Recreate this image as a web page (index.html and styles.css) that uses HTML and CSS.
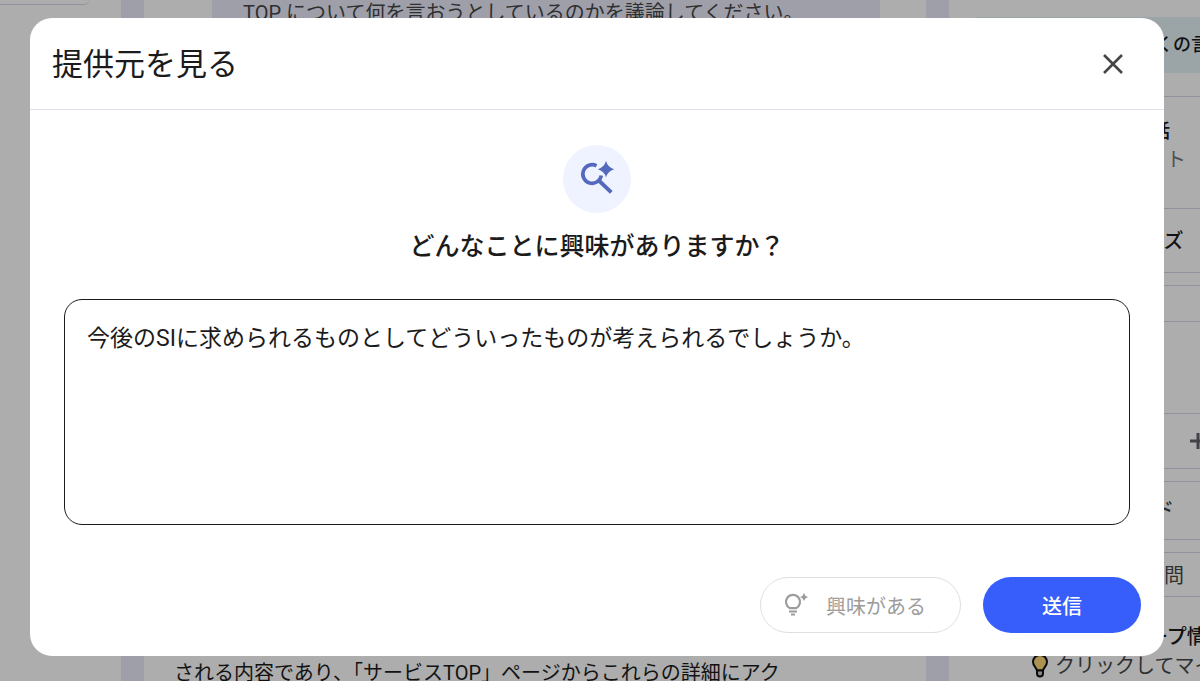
FILE: index.html
```html
<!DOCTYPE html>
<html lang="ja">
<head>
  <meta charset="UTF-8">
  <meta name="viewport" content="width=device-width, initial-scale=1">
  <title>提供元を見る</title>
  <link rel="stylesheet" href="styles.css">
</head>
<body>

  <div class="app">
    <aside class="left">
      <div class="left-card"></div>
    </aside>

    <main class="chat">
      <div class="bubble">TOP について何を言おうとしているのかを議論してください。</div>
      <p class="answer">される内容であり、「サービスTOP」ページからこれらの詳細にアク</p>
    </main>

    <aside class="right">
      <div class="banner">多くの言</div>
      <div class="studio">
        <div class="talk">
          <strong>会話</strong>
          <span class="list">スト</span>
        </div>
        <div class="custom shift"><strong>イズ</strong></div>
      </div>
      <div class="panel">
        <div class="panel-head"></div>
        <div class="panel-body"></div>
        <div class="panel-add">
          <svg width="18" height="18" viewBox="0 0 18 18"><path d="M9 1v16M1 9h16" stroke="#62646a" stroke-width="3"/></svg>
        </div>
      </div>
      <div class="panel guide">ード</div>
      <div class="panel faq shift">質問</div>
      <strong class="info">ープ情</strong>
      <div class="hint">
        <svg width="18" height="24" viewBox="0 0 18 24">
          <path d="M6 16.500C5.500 13.500 2 12 2 8a7 7 0 0 1 14 0c0 4-3.500 5.500-4 8.500z" fill="#ffd676" stroke="#111" stroke-width="2"/>
          <path d="M6 16.500v3a3 3 0 0 0 6 0v-3z" fill="#c8ccd2" stroke="#111" stroke-width="2"/>
        </svg>
        <span>クリックしてマイ</span>
      </div>
    </aside>
  </div>

  <div class="backdrop">
    <form class="modal" role="dialog" aria-labelledby="modalTitle">
      <header class="modal-header">
        <h1 id="modalTitle">提供元を見る</h1>
        <button type="button" class="close" aria-label="閉じる">
          <svg width="22" height="22" viewBox="0 0 22 22"><path d="M2 2l18 18M20 2L2 20" stroke="#444746" stroke-width="2.600"/></svg>
        </button>
      </header>

      <div class="modal-body">
        <div class="search-icon">
          <svg width="68" height="68" viewBox="0 0 68 68">
            <path d="M33.500 20.800A9.300 9.300 0 1 0 38.300 30.500" fill="none" stroke="#5468bd" stroke-width="3.600"/>
            <path d="M35.800 35.500L48.300 47.300" stroke="#5468bd" stroke-width="3.800"/>
            <path d="M43 16q1.800 6.500 8.200 8.300-6.400 1.700-8.200 8.200-1.800-6.500-8.200-8.200 6.400-1.800 8.200-8.300z" fill="#5468bd"/>
          </svg>
        </div>
        <label for="interest">どんなことに興味がありますか？</label>
        <textarea id="interest" name="interest">今後のSIに求められるものとしてどういったものが考えられるでしょうか。</textarea>
      </div>

      <footer class="modal-footer">
        <button type="button" class="btn curious" disabled>
          <svg width="24" height="24" viewBox="0 0 24 24">
            <path d="M6 15.200a7 7 0 1 1 6 0z" fill="none" stroke="#9c9c9c" stroke-width="2.200"/>
            <path d="M5 18.500h8M7 21.500h4" stroke="#9c9c9c" stroke-width="2"/>
            <path d="M20 0q.8 3.200 4 4-3.200.8-4 4-.8-3.200-4-4 3.200-.8 4-4z" fill="#9c9c9c"/>
          </svg>
          興味がある
        </button>
        <button type="submit" class="btn send">送信</button>
      </footer>
    </form>
  </div>

</body>
</html>
```
FILE: styles.css
```css
* {
  box-sizing: border-box;
}

body {
  margin: 0;
  font-family: Roboto, "Noto Sans CJK JP", sans-serif;
  font-size: 20px;
  color: #1b1b1c;
}

strong {
  font-weight: 500;
}

/* page behind the dialog */
.app {
  display: grid;
  grid-template-columns: 121px 1fr 251px;
  gap: 23px;
  height: 100vh;
  overflow: hidden;
  background: #eaeafb;
  white-space: nowrap;
}

.left,
.chat,
.right {
  background: #fff;
  overflow: hidden;
}

.left-card {
  height: 5px;
  margin-right: 32px;
  border-bottom: 1px solid #d5d9e8;
  border-bottom-right-radius: 20px;
}

.bubble {
  height: 600px;
  margin: 0 46px 0 68px;
  padding: 0 31px;
  line-height: 26px;
  background: #eaeafb;
  color: #444746;
}

.answer {
  margin: 0;
  padding: 58px 30px 0;
  line-height: 30px;
}

.right {
  padding: 17px 0 0 26px;
}

.banner {
  height: 56px;
  padding-left: 162px;
  line-height: 56px;
  font-size: 18px;
  font-weight: 500;
  background: #e5f3f8;
}

/* the cards run on past the right edge of the window */
.studio,
.panel {
  margin-right: -20px;
  border: 1px solid #d5d9e8;
}

.studio {
  margin-top: 23px;
}

.talk {
  display: flex;
  flex-direction: column;
  height: 111px;
  padding: 20px 0 0 156px;
  line-height: 29px;
  color: #444746;
}

.talk strong {
  font-size: 19px;
  color: #1b1b1c;
}

.list {
  padding-left: 14px;
  color: #777a80;
}

.custom {
  height: 64px;
  line-height: 64px;
  border-top: 1px solid #d5d9e8;
}

.shift {
  padding-left: 168px;
}

.panel {
  margin-top: 12px;
  color: #444746;
}

.panel-head {
  height: 36px;
  border-bottom: 1px solid #d5d9e8;
}

.panel-body {
  height: 92px;
  border-bottom: 1px solid #d5d9e8;
}

.panel-add {
  display: flex;
  align-items: center;
  justify-content: flex-end;
  height: 54px;
}

.panel-add svg {
  margin-right: 12px;
}

.guide {
  height: 59px;
  padding-left: 158px;
  line-height: 56px;
  font-weight: 500;
}

.faq {
  height: 45px;
  line-height: 46px;
}

.info {
  display: block;
  margin-top: 25px;
  padding-left: 173px;
  line-height: 30px;
}

.hint {
  display: flex;
  align-items: center;
  gap: 6px;
  padding-left: 56px;
  line-height: 28px;
  color: #444746;
}

.hint svg {
  flex-shrink: 0;
}

/* dialog */
.backdrop {
  position: fixed;
  inset: 0;
  display: flex;
  padding: 18px 36px 25px 30px;
  background: rgba(0, 0, 0, 0.32);
}

.modal {
  display: flex;
  flex: 1;
  flex-direction: column;
  border-radius: 22px;
  background: #fff;
}

.modal-header {
  display: flex;
  align-items: center;
  justify-content: space-between;
  height: 92px;
  padding: 0 40px 0 22px;
  border-bottom: 1px solid #dde1eb;
}

.modal-header h1 {
  margin: 0;
  padding-bottom: 5px;
  font-size: 31px;
  font-weight: 400;
}

.close {
  display: flex;
  padding: 0;
  border: 0;
  background: none;
}

.modal-body {
  display: flex;
  flex: 1;
  flex-direction: column;
  align-items: center;
  padding: 35px 34px 52px;
}

.search-icon {
  width: 68px;
  height: 68px;
  border-radius: 50%;
  background: #eef3ff;
}

.modal-body label {
  margin: 14px 0 32px;
  line-height: 40px;
  font-size: 25px;
  font-weight: 500;
}

.modal-body textarea {
  flex: 1;
  width: 100%;
  padding: 20px 22px;
  border: 1px solid #1b1b1c;
  border-radius: 18px;
  outline: 0;
  resize: none;
  background: #fff;
  font: inherit;
  font-size: 23px;
  line-height: 38px;
  color: #1b1b1c;
}

.modal-footer {
  display: flex;
  justify-content: flex-end;
  gap: 22px;
  padding: 0 23px 23px;
}

.btn {
  display: flex;
  align-items: center;
  justify-content: center;
  height: 56px;
  border: 0;
  border-radius: 28px;
  font: inherit;
}

.curious {
  gap: 18px;
  padding: 0 34px 0 23px;
  border: 1px solid #dfdfdf;
  background: #fff;
  color: #9c9c9c;
}

.send {
  padding: 0 59px;
  background: #375dfb;
  color: #fff;
  font-weight: 500;
}
```
